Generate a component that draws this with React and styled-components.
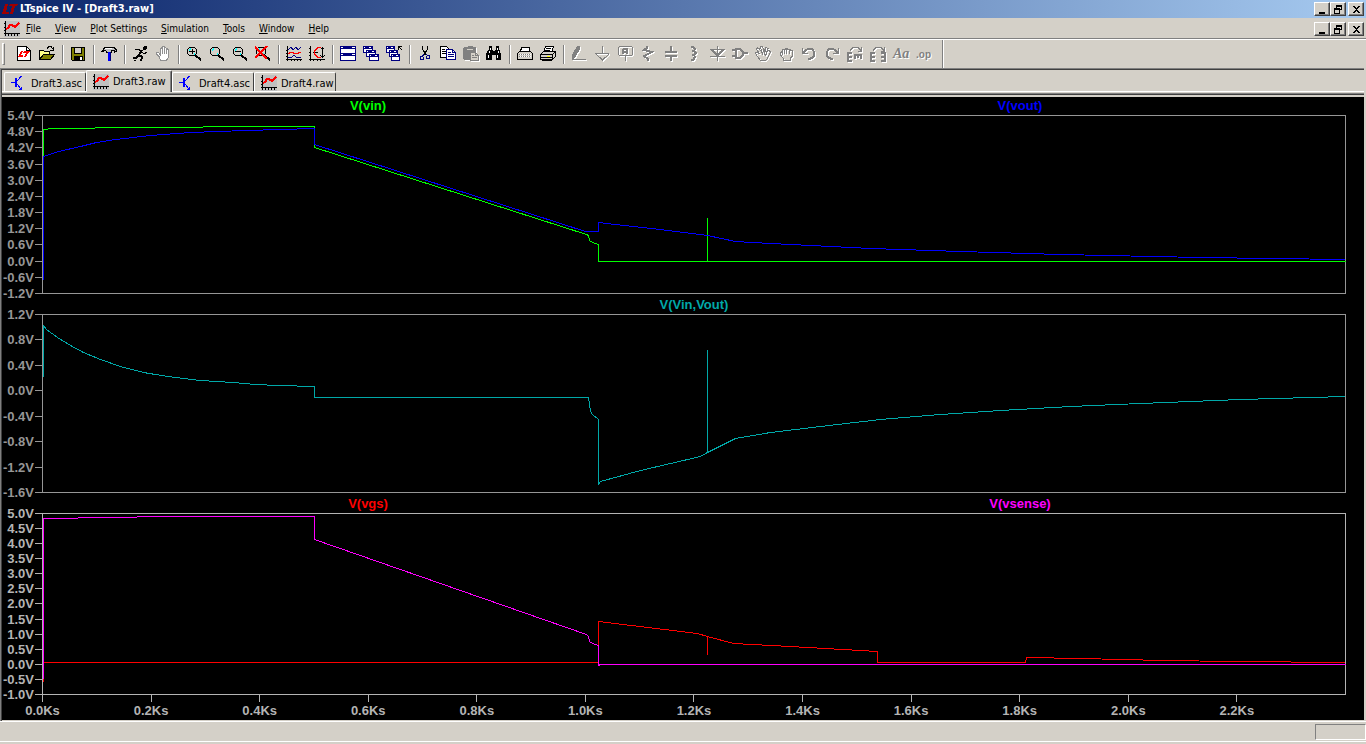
import React from 'react'
import styled, { createGlobalStyle, css } from 'styled-components'

const GlobalStyle = createGlobalStyle`
*, *::before, *::after {
  box-sizing: border-box;
}

body {
  margin: 0;
  background-color: #d4d0c8;
  font-family: "DejaVu Sans Condensed", "DejaVu Sans", sans-serif;
  font-size: 10px;
}

button {
  font: inherit;
  color: inherit;
  padding: 0;
  border: 0;
  background: none;
}
`;

const plotIcon = (
  <>
    <path fill="#c0c0c0" d="M0 0h16v16H0z" />
    <path stroke="#000" fill="none" d="M1.500 0V15M0 12.500H16M0 2.500h2M0 6.500h2M0 9.500h2M4.500 12v3M7.500 12v3M10.500 12v3M13.500 12v3" />
    <path stroke="#f00" strokeWidth="2" fill="none" d="M2 8L4 7L6 4H8L11 6L15 2" />
  </>
)

const lens = (
  <>
    <circle cx="6" cy="5.500" r="4.500" fill="#d4d0c8" stroke="#000" />
    <path stroke="#0ff" fill="none" d="M3 4.500L5 2.500M8 8.500L9 7" />
    <path stroke="#000" strokeWidth="2" d="M9 9L15 14" />
  </>
)

const windowShape = (x, y, w, h) => (
  <>
    <path fill="#fff" stroke="#000080" d={`M${x}.5 ${y}.5h${w}v${h}h-${w}z`} />
    <path fill="#000080" d={`M${x} ${y}h${w + 1}v3h-${w + 1}z`} />
    <path fill="#fff" d={`M${x + 1} ${y + 1}h1v1h-1zM${x + w - 3} ${y + 1}h2v1h-2z`} />
  </>
)

const icons = {
  plot: plotIcon,
  appLogo: <path fill="#a00000" d="M3 3h3L4 11h3v2H0zM8 3h8l-1 2h-2l-2 8H8l2-8H7z" />,
  schematic: (
    <>
      <path stroke="#00f" fill="none" d="M0 7.500H4M6 6L10.500 1M6 9L10 14" />
      <path fill="#00f" d="M4 3h2v9H4zM8 14l3-3v4H8z" />
    </>
  ),
  new: (
    <>
      <path fill="#fff" stroke="#000" d="M1.500.5h9l4 4v10h-13z" />
      <path fill="none" stroke="#000" d="M10.500.5v4h4" />
      <path fill="#f00" d="M5 5h2L5 9h2v2H2zM8 5h6l-1 2h-1l-2 4H8l2-4H7z" />
    </>
  ),
  open: (
    <>
      <path fill="#ff8" stroke="#000" d="M.5 12.500v-8h4l1 1h5v3" />
      <path fill="#808000" stroke="#000" d="M.5 13.500l4-5h11l-4 5z" />
      <path fill="none" stroke="#000" d="M8 2.500L10 .5h2L14 3M14.500 1v3.500H11" />
    </>
  ),
  save: (
    <>
      <path fill="#808000" stroke="#000" d="M1.500 1.500h13v13h-12l-1-1z" />
      <path fill="#d4d0c8" stroke="#000" d="M4.500 1.500h7v6h-7z" />
      <path fill="#000" d="M4 10h9v5H4z" />
      <path fill="#fff" d="M10 11h2v3h-2z" />
    </>
  ),
  hammer: (
    <>
      <path fill="#c0c0c0" stroke="#000" d="M.5 5.500L4 1.500h9l2 2v2l-2 1v-2h-2l-1 2H6L4.500 4.500z" />
      <path fill="#fff" d="M4 2h7v1H4z" />
      <path fill="#00f" d="M7 6h3v9H7z" />
      <path fill="#000080" d="M9 6h1v9H9z" />
    </>
  ),
  run: (
    <>
      <circle cx="13" cy="2" r="2" />
      <path fill="none" stroke="#000" strokeWidth="2" d="M10 4L7 9L10 11L9 15M7 9L4 12H1" />
      <path fill="none" stroke="#000" d="M3 3.500L6 3L9 5L12 8L15 6M2 14.500H4" />
    </>
  ),
  halt: (
    <>
      <path fill="#fff" stroke="#909090" d="M4.500 11L1.500 8V6.500h2L5.500 9V3l1-1 1 1V1l1-1 1 1v1.500l1-1 1 1V4l1-1 1 1v7l-2 3.500h-6z" />
      <path fill="none" stroke="#909090" d="M7.500 3v5M9.500 2v6M11.500 4v4" />
    </>
  ),
  zoomIn: <>{lens}<path stroke="#000" d="M3 5.500h6M6.500 3v5" /></>,
  zoomArea: lens,
  zoomOut: <>{lens}<path stroke="#000" d="M3 5.500h6" /></>,
  zoomFit: <>{lens}<path stroke="#f00" strokeWidth="2" d="M0 1L12 13M12 0L0 12" /></>,
  autorange: (
    <>
      <path fill="none" stroke="#000" d="M1.500 0V15M0 13.500H16M0 4.500h2M0 7.500h2M0 10.500h2M5.500 13v2M8.500 13v2M11.500 13v2M14.500 13v2" />
      <path fill="none" stroke="#000080" d="M2 4L5 1L7 4L10 1L12 4L15 1M2 11.500H5L8 9.500L11 11.500H15" />
      <path fill="none" stroke="#f00" d="M2 7.500L5 6.500L10 7.500L15 6.500" />
    </>
  ),
  limits: (
    <>
      <path fill="none" stroke="#000" d="M1.500 0V15M0 13.500H16M0 2.500h2M0 6.500h2M0 9.500h2M4.500 13v2M8.500 13v2M11.500 13v2M13.500 1v11M11.500 3.500l2-2 2 2M11.500 9.500l2 2 2-2M4 6.500h5" />
      <path fill="none" stroke="#f00" d="M12 1.500H9L5.500 5v3L9 11.500h3" />
    </>
  ),
  tile: (
    <>
      <path fill="#fff" stroke="#000080" d="M.5.5h15v7H.5zM.5 7.500h15v7H.5z" />
      <path fill="#000080" d="M0 0h16v3H0zM0 7h16v3H0z" />
      <path fill="#fff" d="M1 1h2v1H1zM12 1h3v1h-3zM1 8h2v1H1zM12 8h3v1h-3z" />
    </>
  ),
  cascade: <>{windowShape(0, 0, 9, 6)}{windowShape(3, 4, 9, 6)}{windowShape(6, 8, 9, 6)}</>,
  closeAll: (
    <>
      {windowShape(0, 0, 8, 6)}{windowShape(3, 4, 8, 6)}{windowShape(5, 8, 8, 6)}
      <path fill="none" stroke="#000" d="M12.500 4V.5H16M12.500.5L16 4" />
    </>
  ),
  cut: (
    <>
      <path fill="none" stroke="#000" d="M5.500 0V3L9 9M10.500 0V3L7 9" />
      <path fill="none" stroke="#000080" d="M7 8L5.500 10.500h-2v3h3v-3M9 8L10.500 9.500h2v3h-3v-3" />
    </>
  ),
  copy: (
    <>
      <path fill="#fff" stroke="#000" d="M.5.5h6l3 3v8h-9z" />
      <path fill="none" stroke="#000" d="M2 3.500h3M2 5.500h4M2 7.500h4" />
      <path fill="#fff" stroke="#000080" d="M6.500 3.500h6l3 3v7h-9z" />
      <path fill="none" stroke="#000080" d="M8 6.500h3M8 8.500h6M8 10.500h6M12.500 3.500v3h3" />
    </>
  ),
  paste: (
    <>
      <path fill="#808080" d="M1 1h3l1-1h4l1 1h3v5h-5v8H1l-1-1V2z" />
      <path fill="#d4d0c8" stroke="#808080" d="M7.500 6.500h5l3 3v5h-8z" />
      <path fill="none" stroke="#808080" d="M9 9.500h2M9 11.500h5M12.500 6v3.500h3" />
      <path fill="#d4d0c8" d="M4 3h6v1H4z" />
    </>
  ),
  find: (
    <>
      <path fill="#000" d="M3 0h3v3l1 2h2l1-2V0h3v3l2 5v6h-5V9H6v5H0V8l3-5z" />
      <path stroke="#fff" d="M4.500 2v2M3.500 5v2M2.500 9v3M11.500 2v2M12.500 5v2M11.500 9v3" />
    </>
  ),
  printSetup: (
    <>
      <path fill="#fff" stroke="#000" d="M3.500 5.500l1-4h8v4" />
      <path fill="#d4d0c8" stroke="#000" d="M.5 7.500l2-2h11l2 2v6h-15z" />
      <path stroke="#808080" strokeDasharray="1 1" d="M2 8.500h12M2 10.500h12" />
      <path stroke="#fff" strokeDasharray="1 1" d="M3 8.500h12M3 10.500h12" />
      <path fill="#000" d="M1 13h14v1H1z" />
    </>
  ),
  print: (
    <>
      <path fill="#fff" stroke="#000" d="M3.500 6.500l2-6h8l-2 6" />
      <path fill="#d4d0c8" stroke="#000" d="M.5 8.500l3-3h12v5l-3 3H.5z" />
      <path fill="none" stroke="#000" d="M6 2.500h5M5 4.500h5M.5 8.500h12v5M12.500 8.500l3-3M1 11.500h11" />
      <path fill="#ff0" d="M7 10h3v1H7z" />
      <path fill="none" stroke="#000" d="M2 14.500h10" />
    </>
  ),
  wire: (
    <>
      <path fill="currentColor" d="M6 0h3v3L5 10l-3 3H1V9z" />
      <path fill="none" stroke="currentColor" d="M1 13.500h14" />
    </>
  ),
  ground: <path fill="none" stroke="currentColor" d="M8.500 0v7M1 7.500h14M2 8l6.500 6L15 8" />,
  label: (
    <>
      <path fill="none" stroke="currentColor" d="M2.500.5h12l1 1v7l-1 1h-12l-1-1v-7zM8.500 10v5" />
      <path fill="none" stroke="currentColor" strokeWidth="2" d="M6 8V4l1-1h3v5M6 6h4" />
    </>
  ),
  resistor: <path fill="none" stroke="currentColor" strokeWidth="2" d="M7 0v2L4 4l8 2-8 4 4 3v2" />,
  capacitor: <path fill="none" stroke="currentColor" strokeWidth="2" d="M8 0v6M2 6h12M2 10h12M8 10v5" />,
  inductor: <path fill="none" stroke="currentColor" strokeWidth="2" d="M5 1h2l2 2-1 2H6M8 5l2 2-2 2H6M8 9l1 2-2 3H5" />,
  diode: (
    <>
      <path fill="none" stroke="currentColor" d="M8.500 0v15M1 3.500h15M1 10.500h15" />
      <path fill="none" stroke="currentColor" strokeWidth="2" d="M3 4l5.500 6L14 4" />
    </>
  ),
  gate: <path fill="none" stroke="currentColor" strokeWidth="2" d="M0 4h4M0 10h4M4 2v11M3 3h5l3 3v3l-3 3H3M11 7h5" />,
  move: (
    <path fill="none" stroke="currentColor" d="M5.500 14.500L1.500 9l-1-2 2-1 2 2L1.500 3l1-1 2 1 2 3L5.500.5h2l1.500 5 2-4 2 1-1.500 4 2-2 2 1-2 5-3 4.500zM6 4l2 5M11 3L9 9M12 7l-2 3" />
  ),
  drag: (
    <path fill="none" stroke="currentColor" d="M5.500 14.500v-2L2.500 9V6.500l2-1V4l1-1h2V2h2v1h2l1 1h2v6l-2 2v2.500zM6.500 4v4M8.500 3v5M11.500 4v4M4.500 6v3" />
  ),
  undo: (
    <>
      <path fill="none" stroke="currentColor" strokeWidth="2" d="M2 7L5 4Q9 1 12 4Q15 8 12 11Q10 13 7 13" />
      <path fill="currentColor" d="M1 2h1v5h5v1H1z" />
    </>
  ),
  redo: (
    <>
      <path fill="none" stroke="currentColor" strokeWidth="2" d="M14 7L11 4Q7 1 4 4Q1 8 4 11Q6 13 9 13" />
      <path fill="currentColor" d="M14 2h1v6H9V7h5z" />
    </>
  ),
  rotate: (
    <>
      <path fill="none" stroke="currentColor" d="M3 4.500l3-3h5l3 3M14.500 1v4H11" />
      <path fill="none" stroke="currentColor" strokeWidth="2" d="M5 7H1v8h4M1 11h4M7 9h8M8 9v4M11 9v3M14 9v4" />
    </>
  ),
  mirror: (
    <>
      <path fill="none" stroke="currentColor" d="M3 4.500l3-3h5l3 3M14.500 1v4H11" />
      <path fill="none" stroke="currentColor" strokeWidth="2" d="M5 7H1v8h4M1 11h4M11 7h4v8h-4M15 11h-4" />
    </>
  ),
}

const Glyph = styled.svg`
  display: block;
  flex: none;
  shape-rendering: crispEdges;
  ${({ $disabled }) => $disabled && css`
    filter: drop-shadow(1px 1px 0 #fff);
  `}
`;

const Icon = ({ name, disabled }) => (
  <Glyph $disabled={disabled} width="16" height="16" viewBox="0 0 16 16" aria-hidden="true">
    {icons[name]}
  </Glyph>
)

const menus = ['File', 'View', 'Plot Settings', 'Simulation', 'Tools', 'Window', 'Help']

// each inner list is one group of buttons, groups are divided by a separator
const tools = [
  ['new', 'open'],
  ['save'],
  ['hammer'],
  ['run', 'halt'],
  ['zoomIn', 'zoomArea', 'zoomOut', 'zoomFit'],
  ['autorange', 'limits'],
  ['tile', 'cascade', 'closeAll'],
  ['cut', 'copy', 'paste', 'find'],
  ['printSetup', 'print'],
  ['wire', 'ground', 'label', 'resistor', 'capacitor', 'inductor', 'diode', 'gate',
    'move', 'drag', 'undo', 'redo', 'rotate', 'mirror', 'text', 'op'],
]

const disabledTools = [...tools[9], 'paste']

const tabs = [
  { name: 'Draft3.asc', icon: 'schematic' },
  { name: 'Draft3.raw', icon: 'plot' },
  { name: 'Draft4.asc', icon: 'schematic' },
  { name: 'Draft4.raw', icon: 'plot' },
]

const panes = [
  {
    gap: 18,
    size: 179,
    top: 115,
    axis: '#969696',
    labels: ['5.4V', '4.8V', '4.2V', '3.6V', '3.0V', '2.4V', '1.8V', '1.2V', '0.6V', '0.0V', '-0.6V', '-1.2V'],
    traces: [
      {
        name: 'V(vin)',
        color: '#00ff00',
        points: '43,276 43,129 52,128 94,128 95,127 202,127 203,126 314,126 314,147 586,234 588,235 589,240 592,242 598,244 598,261 707,261 707,217 707,261 1345,261',
      },
      {
        name: 'V(vout)',
        color: '#0000ff',
        points: '43,279 43,156 58,151 80,146 96,142 115,139 150,135 190,132 245,130 314,128 314,144 585,231 598,231 598,222 606,223 660,229 707,235 735,241 770,243 870,248 960,251 1060,254 1200,257 1345,259',
      },
    ],
  },
  {
    gap: 20,
    size: 179,
    top: 314,
    axis: '#969696',
    labels: ['1.2V', '0.8V', '0.4V', '0.0V', '-0.4V', '-0.8V', '-1.2V', '-1.6V'],
    traces: [
      {
        name: 'V(Vin,Vout)',
        color: '#00a8a8',
        points: '43,376 43,325 46,329 57,337 70,345 83,352 100,359 120,366 143,372 167,376 200,380 233,382 255,384 278,385 314,386 314,397 588,397 589,404 590,411 592,414 598,419 598,484 600,481 640,470 700,456 707,452 707,349 707,452 719,446 735,438 770,432 820,426 880,419 940,414 1000,410 1070,406 1140,403 1240,399 1345,396',
      },
    ],
  },
  {
    gap: 20,
    size: 182,
    top: 513,
    axis: '#b4b4b4',
    labels: ['5.0V', '4.5V', '4.0V', '3.5V', '3.0V', '2.5V', '2.0V', '1.5V', '1.0V', '0.5V', '0.0V', '-0.5V', '-1.0V'],
    traces: [
      {
        name: 'V(vgs)',
        color: '#ff0000',
        points: '43,681 43,662 598,662 598,621 606,622 697,633 707,636 707,654 707,636 733,643 790,646 877,651 877,662 1025,662 1026,657 1080,658 1163,660 1233,661 1345,662',
      },
      {
        name: 'V(vsense)',
        color: '#ff00ff',
        points: '43,678 43,518 77,518 78,517 136,517 137,516 314,516 314,539 586,634 588,636 589,641 592,643 598,645 598,665 600,664 1345,664',
      },
    ],
  },
]

const times = ['0.0Ks', '0.2Ks', '0.4Ks', '0.6Ks', '0.8Ks', '1.0Ks', '1.2Ks', '1.4Ks', '1.6Ks', '1.8Ks', '2.0Ks', '2.2Ks', '']

const WindowControls = () => (
  <Controls>
    <CaptionButton aria-label="Minimize">
      <Glyph width="12" height="11" viewBox="0 0 12 11"><path d="M2 8h6v2H2z" /></Glyph>
    </CaptionButton>
    <CaptionButton aria-label="Restore">
      <Glyph width="12" height="11" viewBox="0 0 12 11">
        <path fill="none" stroke="#000" d="M3.500 4V1.500h5v4H7M3 1h6M1.500 4.500h5v5h-5z" />
        <path d="M3 1h6v2H3zM1 4h6v2H1z" />
      </Glyph>
    </CaptionButton>
    <CaptionButton aria-label="Close" $apart>
      <Glyph width="12" height="11" viewBox="0 0 12 11">
        <path d="M2 2h2v1h1v1h1V3h1V2h2v1H8v1H7v1H6v1h1v1h1v1h1v1H7V8H6V7H5v1H4v1H2V8h1V7h1V6h1V5H4V4H3V3H2z" />
      </Glyph>
    </CaptionButton>
  </Controls>
)

const Tool = ({ name }) => {
  const disabled = disabledTools.includes(name)

  return (
    <ToolButton disabled={disabled} aria-label={name}>
      {name === 'text' && <TextTool>Aa</TextTool>}
      {name === 'op' && <OpTool>.op</OpTool>}
      {icons[name] && <Icon name={name} disabled={disabled} />}
    </ToolButton>
  )
}

const Pane = ({ pane }) => (
  <>
    <Titles $height={pane.gap}>
      {pane.traces.map((trace) => (
        <TraceName key={trace.name} $color={trace.color}>{trace.name}</TraceName>
      ))}
    </Titles>
    <PlotRow $size={pane.size} $color={pane.axis}>
      <VoltAxis>
        {pane.labels.map((label) => <Volt key={label}>{label}</Volt>)}
      </VoltAxis>
      <PlotArea>
        <Plot viewBox={`42 ${pane.top} 1304 ${pane.size}`} preserveAspectRatio="none">
          <g fill="none" transform="translate(0.5 0.5)">
            <rect x="42" y={pane.top} width="1303" height={pane.size - 1} stroke={pane.axis} />
            {pane.traces.map((trace) => (
              <polyline key={trace.name} points={trace.points} stroke={trace.color} />
            ))}
          </g>
        </Plot>
      </PlotArea>
    </PlotRow>
  </>
)

const App = () => {
  const [active, setActive] = React.useState('Draft3.raw')

  return (
    <Window>
      <GlobalStyle />
      <TitleBar>
        <Icon name="appLogo" />
        <Title>LTspice IV - [Draft3.raw]</Title>
        <WindowControls />
      </TitleBar>
      <MenuBar>
        <Icon name="plot" />
        <Menus>
          {menus.map((menu) => (
            <MenuButton key={menu}><u>{menu[0]}</u>{menu.slice(1)}</MenuButton>
          ))}
        </Menus>
        <WindowControls />
      </MenuBar>
      <ToolBar>
        <Grip />
        {tools.map((group) => (
          <ToolGroup key={group[0]}>
            {group.map((name) => <Tool key={name} name={name} />)}
          </ToolGroup>
        ))}
      </ToolBar>
      <Workspace>
        <Tabs role="tablist">
          {tabs.map((tab) => (
            <Tab
              key={tab.name}
              role="tab"
              aria-selected={active === tab.name}
              $active={active === tab.name}
              onClick={() => setActive(tab.name)}
            >
              <Icon name={tab.icon} />
              <span>{tab.name}</span>
            </Tab>
          ))}
        </Tabs>
        <Edge />
        <Chart>
          {panes.map((pane) => <Pane key={pane.top} pane={pane} />)}
          <TimeAxis>
            {times.map((time) => <Time key={time}>{time}</Time>)}
          </TimeAxis>
        </Chart>
      </Workspace>
      <StatusBar>
        <StatusBox />
      </StatusBar>
    </Window>
  )
}

const Window = styled.div`
  display: flex;
  flex-direction: column;
  min-height: 100vh;
  background-color: #d4d0c8;
  color: #000;
`;

const TitleBar = styled.header`
  display: flex;
  align-items: center;
  height: 18px;
  padding: 0 2px;
  background: linear-gradient(to right, #0a246a, #a6caf0);
`;

const Title = styled.h1`
  flex: 1;
  margin: 0 0 0 2px;
  color: #fff;
  font-size: 11px;
  line-height: 18px;
  font-weight: bold;
`;

const Controls = styled.div`
  display: flex;
`;

const CaptionButton = styled.button`
  width: 16px;
  height: 14px;
  padding: 1px 2px;
  background-color: #d4d0c8;
  border: 1px solid;
  border-color: #fff #404040 #404040 #fff;
  box-shadow: inset -1px -1px 0 #808080;
  margin-left: ${({ $apart }) => ($apart ? '2px' : '0')};
`;

const MenuBar = styled.nav`
  display: flex;
  align-items: center;
  height: 22px;
  padding: 0 2px 0 4px;
  border-bottom: 1px solid #fff;
  box-shadow: inset 0 -1px 0 #808080;
`;

const Menus = styled.div`
  display: flex;
  flex: 1;
  gap: 2px;
`;

const MenuButton = styled.button`
  padding: 0 6px;
  line-height: 18px;
`;

const ToolBar = styled.div`
  display: flex;
  align-items: center;
  height: 28px;
  padding-left: 2px;
`;

const Grip = styled.div`
  width: 3px;
  height: 22px;
  margin-right: 8px;
  border: 1px solid;
  border-color: #fff #808080 #808080 #fff;
`;

const ToolGroup = styled.div`
  display: flex;
  align-items: center;

  &::after {
    content: "";
    width: 2px;
    height: 19px;
    margin: 0 3px;
    border-left: 1px solid #808080;
    border-right: 1px solid #fff;
  }

  &:last-child::after {
    height: 28px;
    margin-left: 6px;
  }
`;

const ToolButton = styled.button`
  display: flex;
  align-items: center;
  width: 23px;
  height: 22px;
  padding-left: 3px;
  color: #000;

  &:disabled {
    color: #808080;
  }
`;

const TextTool = styled.span`
  font-family: "Liberation Serif", serif;
  font-size: 14px;
  font-style: italic;
  font-weight: bold;
  text-shadow: 1px 1px 0 #fff;
`;

const OpTool = styled.span`
  font-family: "Liberation Sans", sans-serif;
  font-size: 10px;
  font-weight: bold;
  text-shadow: 1px 1px 0 #fff;
`;

const Workspace = styled.main`
  display: flex;
  flex-direction: column;
  flex: 1;
  margin-right: 2px;
  border: solid #808080;
  border-width: 1px 0 0 1px;
  box-shadow: inset 1px 1px 0 #404040;
  padding: 1px 0 1px 1px;
`;

const Tabs = styled.div`
  display: flex;
  align-items: flex-end;
  height: 21px;
  padding-left: 2px;
`;

const Tab = styled.button`
  display: flex;
  align-items: center;
  gap: 4px;
  width: 82px;
  height: 19px;
  padding: 2px 0 0 6px;
  font-size: 11px;
  border: solid;
  border-width: 1px 1px 0 1px;
  border-color: #fff #404040 #404040 #fff;
  border-radius: 2px 2px 0 0;

  ${({ $active }) => $active && css`
    position: relative;
    width: 86px;
    height: 22px;
    margin-bottom: -1px;
    padding-top: 0;
    background-color: #d4d0c8;
    box-shadow: inset -1px 0 0 #808080;
  `}
`;

const Edge = styled.div`
  height: 6px;
  border-top: 1px solid #fff;
  border-bottom: 2px solid #d4d0c8;
  box-shadow: inset 0 -1px 0 #404040, inset 0 -2px 0 #808080;
`;

const Chart = styled.section`
  display: flex;
  flex-direction: column;
  flex: 1;
  padding-right: 18px;
  background-color: #000;
  font-family: "Liberation Sans", sans-serif;
  font-size: 13px;
  font-weight: bold;
`;

const Titles = styled.div`
  display: flex;
  align-items: flex-end;
  flex: none;
  height: ${({ $height }) => $height}px;
  padding-left: 40px;
`;

const TraceName = styled.span`
  flex: 1;
  text-align: center;
  line-height: 18px;
  color: ${({ $color }) => $color};
`;

const PlotRow = styled.div`
  display: flex;
  flex: ${({ $size }) => $size} 0 0px;
  min-height: 120px;
  color: ${({ $color }) => $color};
`;

const VoltAxis = styled.div`
  display: flex;
  flex-direction: column;
  justify-content: space-between;
  width: 40px;
`;

const Volt = styled.div`
  display: flex;
  align-items: center;
  justify-content: flex-end;
  height: 1px;

  &::after {
    content: "";
    width: 7px;
    height: 1px;
    margin-left: 1px;
    background-color: currentColor;
  }
`;

const PlotArea = styled.div`
  display: grid;
  flex: 1;
  min-width: 0;
  min-height: 0;
`;

const Plot = styled.svg`
  display: block;
  width: 100%;
  height: 0;
  min-height: 100%;
  shape-rendering: crispEdges;

  rect, polyline {
    vector-effect: non-scaling-stroke;
  }
`;

const TimeAxis = styled.div`
  display: flex;
  justify-content: space-between;
  flex: none;
  height: 25px;
  padding-left: 40px;
  color: #b4b4b4;
`;

const Time = styled.div`
  display: flex;
  flex-direction: column;
  align-items: center;
  width: 1px;
  line-height: 18px;

  &::before {
    content: "";
    flex: none;
    width: 1px;
    height: 7px;
    background-color: currentColor;
  }

  &:last-child::before {
    display: none;
  }
`;

const StatusBar = styled.footer`
  display: flex;
  justify-content: flex-end;
  height: 23px;
  padding: 2px 0 1px;
  border-top: 1px solid #fff;
  border-bottom: 2px solid #d4d0c8;
  box-shadow: inset 0 -1px 0 #fff;
`;

const StatusBox = styled.div`
  width: 51px;
  height: 16px;
  border: 1px solid;
  border-color: #808080 #fff #fff #808080;
`;

export default App
